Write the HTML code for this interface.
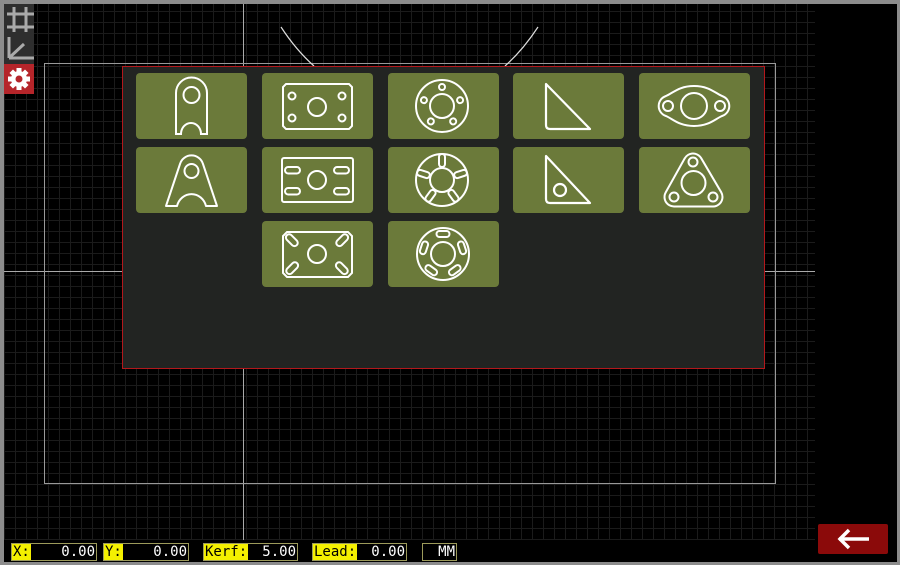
<!DOCTYPE html>
<html><head><meta charset="utf-8"><style>
*{margin:0;padding:0;box-sizing:border-box}
body{width:900px;height:565px;background:#8c8c8c;position:relative;overflow:hidden;font-family:"DejaVu Sans Mono","Liberation Mono",monospace}
#main{position:absolute;left:4px;top:4px;width:893px;height:558px;background:#000}
#grid{position:absolute;left:4px;top:4px;width:811px;height:536px;
background-image:repeating-linear-gradient(90deg,#1b1b1b 0 1px,transparent 1px 11px),repeating-linear-gradient(0deg,#1b1b1b 0 1px,transparent 1px 11px)}
.tb{position:absolute;left:4px;width:30px;height:30px;background:#2e2e2e}
#dlg{position:absolute;left:122px;top:66px;width:643px;height:303px;background:#222422;border:1px solid #b3181c}
.tile{position:absolute;width:111px;height:66px;background:#6b7a3a;border-radius:4px}
.tile svg{position:absolute;left:0;top:0}
.st{position:absolute;top:543px;height:18px;border:1px solid #9c9a5a;background:#000;color:#fff;font-size:14px;line-height:16px}
.st b{font-weight:normal;background:#f4f000;color:#000;position:absolute;left:0;top:0;height:16px;padding:0 1px}
.st span{position:absolute;right:1px;top:0}
</style></head><body>
<div id="main"></div>
<div id="grid"></div>
<svg style="position:absolute;left:0;top:0" width="900" height="565">
<line x1="243.5" y1="4" x2="243.5" y2="540" stroke="#aaa" stroke-width="1"/>
<line x1="4" y1="271.5" x2="815" y2="271.5" stroke="#aaa" stroke-width="1"/>
<rect x="44.5" y="63.5" width="731" height="420" fill="none" stroke="#999" stroke-width="1"/>
<path d="M281,27 Q296,50 314,66" fill="none" stroke="#ddd" stroke-width="1.2"/>
<path d="M538,27 Q523,50 505,66" fill="none" stroke="#ddd" stroke-width="1.2"/>
</svg>
<div class="tb" style="top:4px"><svg width="30" height="30"><g stroke="#aaa" stroke-width="3"><line x1="10" y1="3" x2="10" y2="28"/><line x1="22" y1="3" x2="22" y2="28"/><line x1="3" y1="10" x2="30" y2="10"/><line x1="3" y1="23" x2="30" y2="23"/></g></svg></div>
<div class="tb" style="top:34px"><svg width="30" height="30"><g stroke="#aaa" stroke-width="3" fill="none"><line x1="5" y1="3" x2="5" y2="24"/><line x1="5" y1="24" x2="30" y2="24"/><line x1="5" y1="24" x2="20" y2="10"/></g></svg></div>
<div class="tb" style="top:64px;background:#b5252a"><svg width="30" height="30"><g fill="#fff" transform="translate(15,15)"><circle r="8"/><g><rect x="-2.5" y="-11" width="5" height="22"/><rect x="-2.5" y="-11" width="5" height="22" transform="rotate(45)"/><rect x="-2.5" y="-11" width="5" height="22" transform="rotate(90)"/><rect x="-2.5" y="-11" width="5" height="22" transform="rotate(135)"/></g><circle r="3.5" fill="#b5252a"/></g></svg></div>
<div id="dlg"></div>
<div style="position:absolute;left:0;top:0">
<div class="tile" style="left:136px;top:73px"><svg width="111" height="66" fill="none" stroke="#fff" stroke-width="2"><path d="M40,61 V20 A15.5,15.5 0 0 1 71,20 V61 H65 A10,11 0 0 0 45,61 Z"/><circle cx="55.5" cy="22" r="8"/></svg></div>
<div class="tile" style="left:262px;top:73px"><svg width="111" height="66" fill="none" stroke="#fff" stroke-width="2"><path d="M24,11 H87 L90,14 V53 L87,56 H24 L21,53 V14 Z"/><circle cx="55" cy="34" r="9"/><circle cx="30" cy="23" r="3.5"/><circle cx="80" cy="23" r="3.5"/><circle cx="30" cy="45" r="3.5"/><circle cx="80" cy="45" r="3.5"/></svg></div>
<div class="tile" style="left:388px;top:73px"><svg width="111" height="66" fill="none" stroke="#fff" stroke-width="2"><circle cx="54" cy="33" r="26"/><circle cx="54" cy="33" r="12"/><g transform="translate(54,33)"><circle cx="0" cy="-19" r="3"/><circle cx="0" cy="-19" r="3" transform="rotate(72)"/><circle cx="0" cy="-19" r="3" transform="rotate(144)"/><circle cx="0" cy="-19" r="3" transform="rotate(216)"/><circle cx="0" cy="-19" r="3" transform="rotate(288)"/></g></svg></div>
<div class="tile" style="left:513px;top:73px"><svg width="111" height="66" fill="none" stroke="#fff" stroke-width="2.2"><path d="M33,11 V52 Q33,56 37,56 H77 Z" stroke-linejoin="round"/></svg></div>
<div class="tile" style="left:639px;top:73px"><svg width="111" height="66" fill="none" stroke="#fff" stroke-width="2"><path d="M55,13 C70,13 76,20 83,23 A10.5,10.5 0 0 1 83,43 C76,46 70,53 55,53 C40,53 34,46 27,43 A10.5,10.5 0 0 1 27,23 C34,20 40,13 55,13Z"/><circle cx="55" cy="33" r="13"/><circle cx="29" cy="33" r="5"/><circle cx="81" cy="33" r="5"/></svg></div>
<div class="tile" style="left:136px;top:147px"><svg width="111" height="66" fill="none" stroke="#fff" stroke-width="2"><path d="M30,59 L44,17 A12,12 0 0 1 67,17 L81,59 H70 A15,16 0 0 0 41,59 Z" stroke-linejoin="round"/><circle cx="55.5" cy="24" r="7"/></svg></div>
<div class="tile" style="left:262px;top:147px"><svg width="111" height="66" fill="none" stroke="#fff" stroke-width="2"><rect x="20" y="11" width="71" height="44" rx="2"/><circle cx="55" cy="33" r="9"/><rect x="23" y="20" width="15" height="6.5" rx="3.2"/><rect x="23" y="41" width="15" height="6.5" rx="3.2"/><rect x="72" y="20" width="15" height="6.5" rx="3.2"/><rect x="72" y="41" width="15" height="6.5" rx="3.2"/></svg></div>
<div class="tile" style="left:388px;top:147px"><svg width="111" height="66" fill="none" stroke="#fff" stroke-width="2"><circle cx="54" cy="33" r="26"/><circle cx="54" cy="33" r="12"/><g transform="translate(54,33)"><rect x="-3" y="-26" width="6" height="13" rx="3"/><rect x="-3" y="-26" width="6" height="13" rx="3" transform="rotate(72)"/><rect x="-3" y="-26" width="6" height="13" rx="3" transform="rotate(144)"/><rect x="-3" y="-26" width="6" height="13" rx="3" transform="rotate(216)"/><rect x="-3" y="-26" width="6" height="13" rx="3" transform="rotate(288)"/></g></svg></div>
<div class="tile" style="left:513px;top:147px"><svg width="111" height="66" fill="none" stroke="#fff" stroke-width="2.2"><path d="M33,9 V52 Q33,56 37,56 H77 Z" stroke-linejoin="round"/><circle cx="47" cy="43" r="6"/></svg></div>
<div class="tile" style="left:639px;top:147px"><svg width="111" height="66"><polygon points="54,16 35,50 74,50" fill="#fff" stroke="#fff" stroke-width="21" stroke-linejoin="round"/><polygon points="54,16 35,50 74,50" fill="#6b7a3a" stroke="#6b7a3a" stroke-width="17" stroke-linejoin="round"/><g fill="none" stroke="#fff" stroke-width="2"><circle cx="54.5" cy="36" r="12"/><circle cx="54" cy="15" r="4.5"/><circle cx="35" cy="50" r="4.5"/><circle cx="74" cy="50" r="4.5"/></g></svg></div>
<div class="tile" style="left:262px;top:221px"><svg width="111" height="66" fill="none" stroke="#fff" stroke-width="2"><path d="M25,11 H86 L90,15 V52 L86,56 H25 L21,52 V15 Z"/><circle cx="55" cy="33" r="9"/><g><rect x="23" y="16" width="14" height="6.5" rx="3.2" transform="rotate(45 30 19)"/><rect x="73" y="16" width="14" height="6.5" rx="3.2" transform="rotate(-45 80 19)"/><rect x="23" y="44" width="14" height="6.5" rx="3.2" transform="rotate(-45 30 47)"/><rect x="73" y="44" width="14" height="6.5" rx="3.2" transform="rotate(45 80 47)"/></g></svg></div>
<div class="tile" style="left:388px;top:221px"><svg width="111" height="66" fill="none" stroke="#fff" stroke-width="2"><circle cx="55" cy="33" r="26"/><circle cx="55" cy="33" r="12"/><g transform="translate(55,33)"><rect x="-6.5" y="-23" width="13" height="6" rx="3"/><rect x="-6.5" y="-23" width="13" height="6" rx="3" transform="rotate(72)"/><rect x="-6.5" y="-23" width="13" height="6" rx="3" transform="rotate(144)"/><rect x="-6.5" y="-23" width="13" height="6" rx="3" transform="rotate(216)"/><rect x="-6.5" y="-23" width="13" height="6" rx="3" transform="rotate(288)"/></g></svg></div>
</div>
<div class="st" style="left:11px;width:86px"><b>X:</b><span>0.00</span></div>
<div class="st" style="left:103px;width:86px"><b>Y:</b><span>0.00</span></div>
<div class="st" style="left:203px;width:95px"><b>Kerf:</b><span>5.00</span></div>
<div class="st" style="left:312px;width:95px"><b>Lead:</b><span>0.00</span></div>
<div class="st" style="left:422px;width:35px"><span>MM</span></div>
<div style="position:absolute;left:818px;top:524px;width:70px;height:30px;background:#8b0a0a;border-radius:2px"><svg width="70" height="30"><g stroke="#fff" stroke-width="3.5" fill="none"><line x1="21" y1="15" x2="51" y2="15"/><polyline points="31,6 22,15 31,24"/></g></svg></div>
</body></html>
